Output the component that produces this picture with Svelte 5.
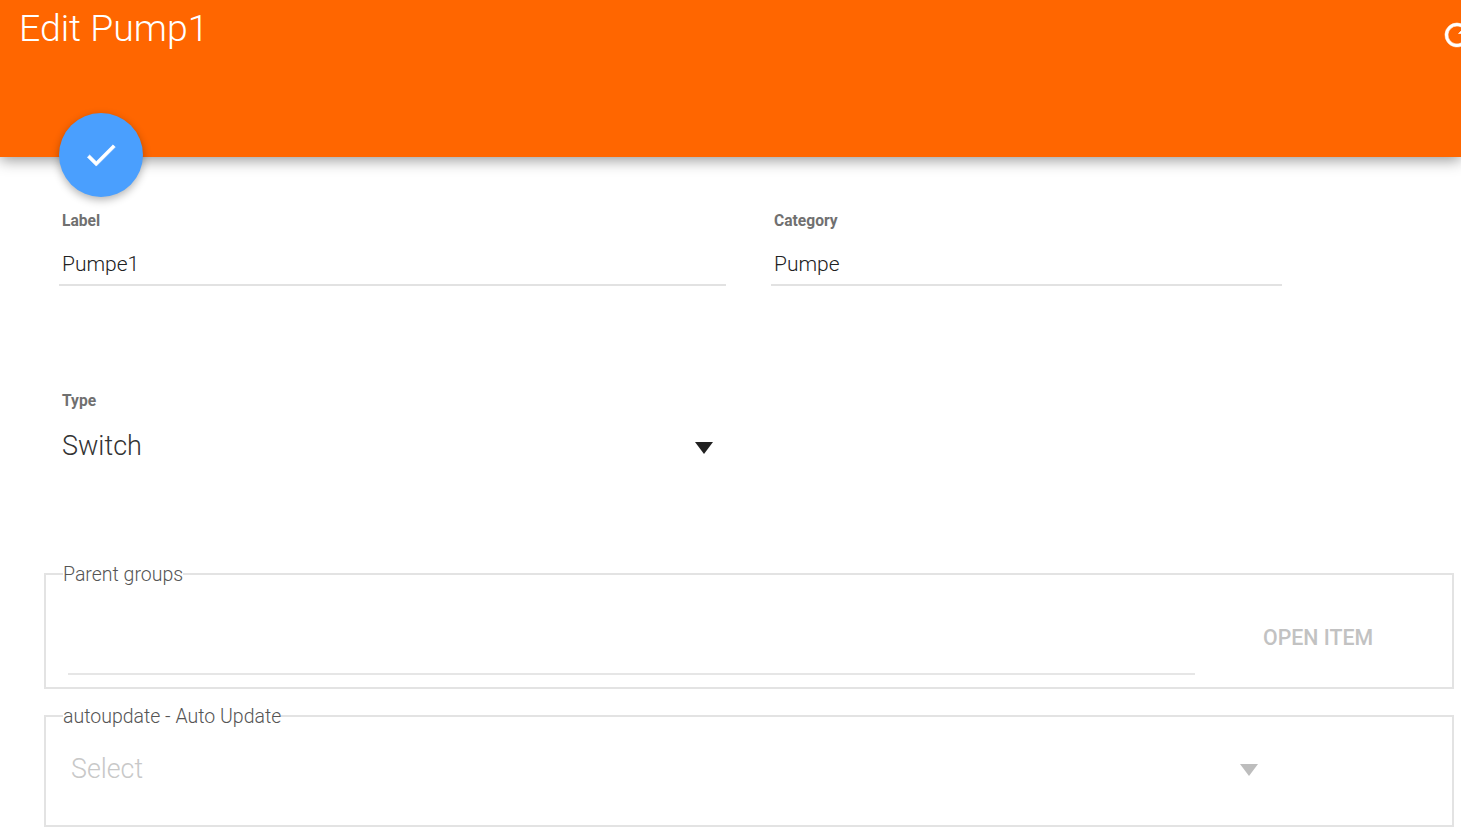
<script>
	let title = "Edit Pump1";
</script>

<div class="page">
	<header class="header">
		<h1 class="title">{title}</h1>
		<svg class="refresh" width="36" height="36" viewBox="0 0 24 24">
			<path
				fill="#fff"
				d="M17.65 6.35A7.96 7.96 0 0 0 12 4a8 8 0 1 0 7.73 10h-2.08A6 6 0 1 1 12 6c1.66 0 3.14.69 4.22 1.78L13 11h7V4l-2.35 2.35z"
			/>
		</svg>
		<button class="fab" aria-label="Save">
			<svg class="check" width="38" height="38" viewBox="0 0 24 24">
				<path fill="#fff" d="M9 16.17 4.83 12l-1.42 1.41L9 19 21 7l-1.41-1.41z" />
			</svg>
		</button>
	</header>

	<main class="form">
		<div class="row">
			<div class="field label-field">
				<span class="field-label">Label</span>
				<div class="field-value">Pumpe1</div>
			</div>
			<div class="field category-field">
				<span class="field-label">Category</span>
				<div class="field-value">Pumpe</div>
			</div>
		</div>

		<div class="type-field">
			<span class="field-label">Type</span>
			<div class="select">
				<span>Switch</span>
				<span class="arrow"></span>
			</div>
		</div>

		<fieldset class="group parent">
			<legend>Parent groups</legend>
			<div class="parent-line"></div>
			<span class="open-item">OPEN ITEM</span>
		</fieldset>

		<fieldset class="group update">
			<legend>autoupdate - Auto Update</legend>
			<div class="update-select">
				<span>Select</span>
				<span class="arrow muted"></span>
			</div>
		</fieldset>
	</main>
</div>

<style>
	:global(body) {
		margin: 0;
		background: #fff;
		overflow: hidden;
	}

	.page {
		height: 834px;
		overflow: hidden;
		font-family: Roboto, "Liberation Sans", sans-serif;
		color: #212121;
	}

	.header {
		position: relative;
		height: 157px;
		background: #ff6600;
		box-shadow: 0 3px 14px rgba(0, 0, 0, 0.42);
		overflow: visible;
	}

	.title {
		margin: 0;
		padding: 5px 0 0 19px;
		font-size: 37.4px;
		line-height: 46px;
		font-weight: 300;
		color: #fff;
	}

	.refresh {
		position: absolute;
		top: 17px;
		left: 1439px;
		stroke: #fff;
		stroke-width: 0.4px;
	}

	.check {
		stroke: #fff;
		stroke-width: 0.4px;
	}

	.fab {
		position: absolute;
		left: 59px;
		top: 113px;
		width: 84px;
		height: 84px;
		padding: 0;
		border: none;
		border-radius: 50%;
		background: #4a9ffe;
		box-shadow: 0 3px 8px rgba(0, 0, 0, 0.3);
		display: flex;
		align-items: center;
		justify-content: center;
	}

	.form {
		padding-top: 53px;
	}

	.row {
		display: flex;
		padding-left: 59px;
		gap: 45px;
	}

	.label-field {
		width: 667px;
	}

	.category-field {
		width: 511px;
	}

	.field {
		border-bottom: 2px solid #e2e2e2;
		height: 74px;
	}

	.field-label {
		display: block;
		font-size: 15.6px;
		line-height: 22px;
		font-weight: 700;
		color: #707070;
		padding-left: 3px;
	}

	.field-value {
		margin-top: 19px;
		padding-left: 3px;
		font-size: 21px;
		line-height: 26px;
		font-weight: 300;
	}

	.type-field {
		margin: 104px 0 0 59px;
		width: 667px;
	}

	.select {
		display: flex;
		align-items: center;
		justify-content: space-between;
		margin-top: 16px;
		padding: 0 13px 0 3px;
		font-size: 27px;
		line-height: 36px;
		font-weight: 300;
		color: #333;
	}

	.arrow {
		width: 0;
		height: 0;
		margin-top: 4px;
		border-left: 9.5px solid transparent;
		border-right: 9.5px solid transparent;
		border-top: 12px solid #212121;
	}

	.arrow.muted {
		margin-top: 2px;
		border-top-color: #bdbdbd;
	}

	.group {
		position: relative;
		box-sizing: border-box;
		width: 1410px;
		margin: 0 0 0 44px;
		padding: 0;
		border: 2px solid #e3e3e3;
		min-width: 0;
	}

	.group legend {
		position: relative;
		top: 1px;
		margin-left: 17px;
		padding: 0;
		font-size: 19.5px;
		line-height: 24px;
		font-weight: 300;
		color: #555;
	}

	.parent {
		margin-top: 98px;
		height: 127px;
	}

	.parent-line {
		position: absolute;
		left: 22px;
		top: 87px;
		width: 1127px;
		border-bottom: 2px solid #e6e6e6;
	}

	.open-item {
		position: absolute;
		left: 1217px;
		top: 39px;
		font-size: 21.3px;
		line-height: 26px;
		font-weight: 500;
		color: #c2c2c2;
	}

	.update {
		margin-top: 15px;
		height: 123px;
	}

	.update-select {
		display: flex;
		align-items: center;
		justify-content: space-between;
		margin-top: 23px;
		padding: 0 194px 0 25px;
		font-size: 26.8px;
		line-height: 36px;
		font-weight: 300;
		color: #c8c8c8;
	}
</style>
